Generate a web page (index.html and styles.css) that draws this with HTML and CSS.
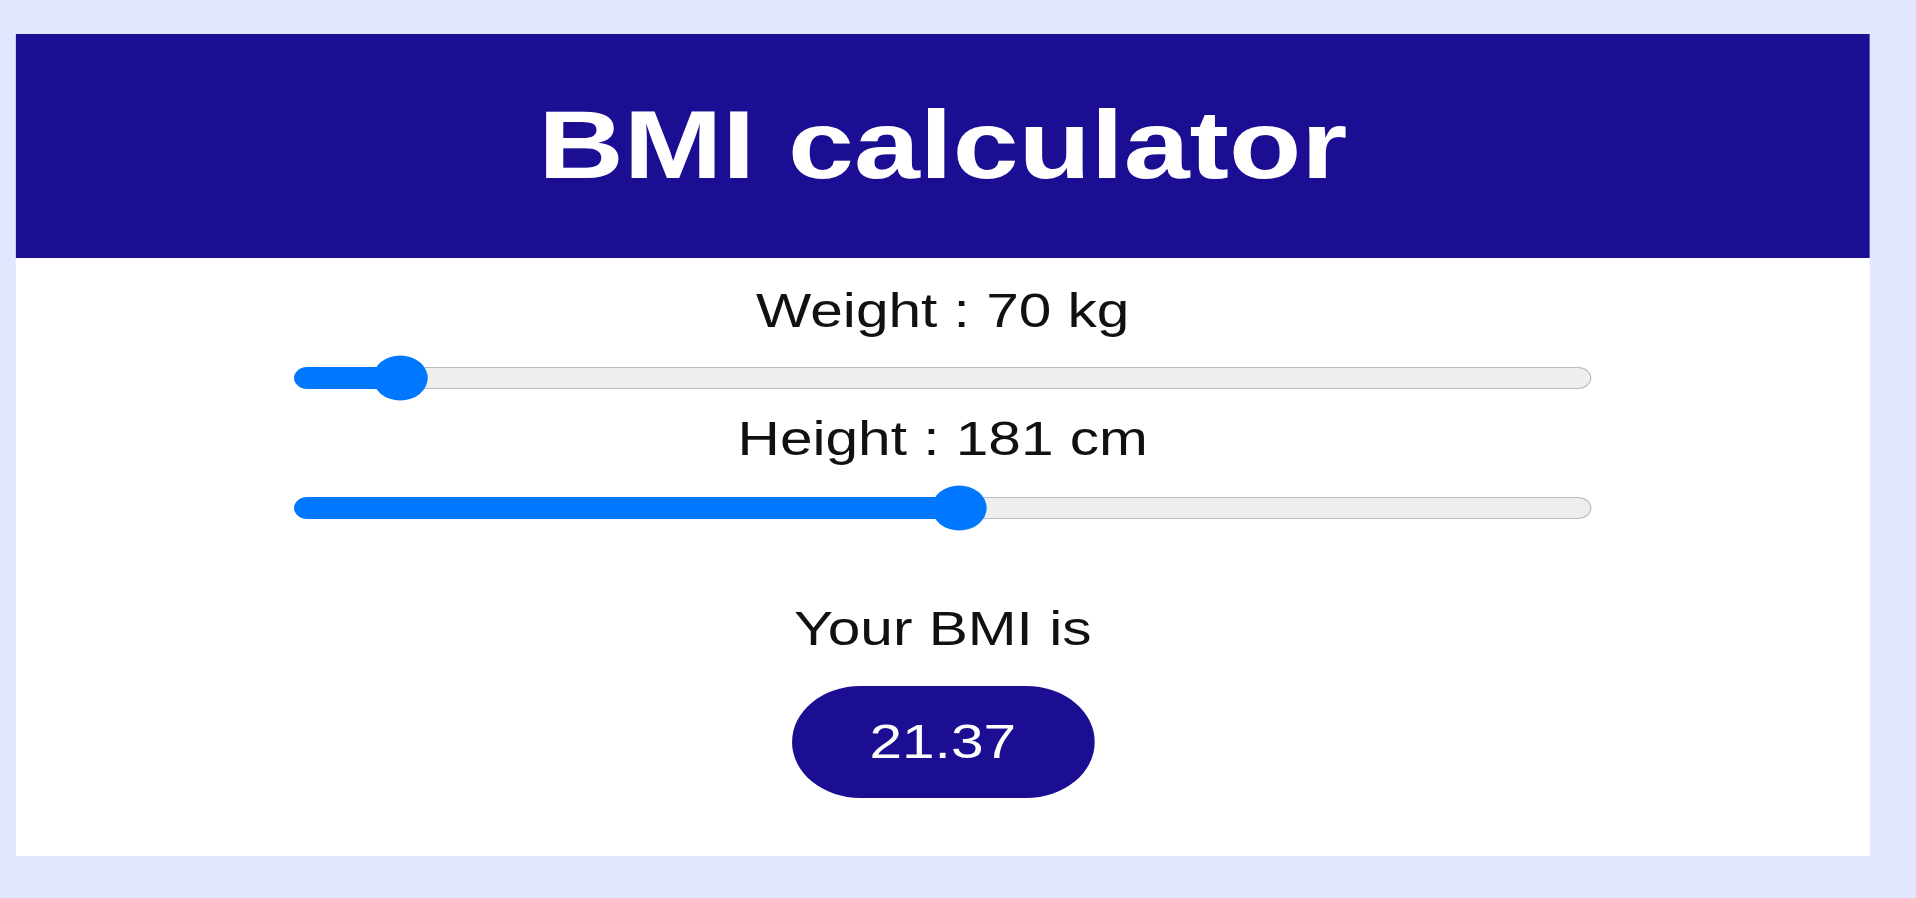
FILE: index.html
```html
<!DOCTYPE html>
<html lang="en">
<head>
<meta charset="utf-8">
<title>BMI calculator</title>
<link rel="stylesheet" href="styles.css">
</head>
<body>
<div class="page">
  <main class="card">
    <header class="card-header">
      <h1 class="title">BMI calculator</h1>
    </header>
    <section class="card-body">
      <div class="field-label">Weight : 70 kg</div>
      <div class="slider slider-first" role="slider" aria-label="Weight" aria-valuenow="70">
        <div class="track">
          <div class="fill" style="width:8.1%"></div>
          <div class="thumb" style="left:8.1%"></div>
        </div>
      </div>
      <div class="field-label">Height : 181 cm</div>
      <div class="slider" role="slider" aria-label="Height" aria-valuenow="181">
        <div class="track">
          <div class="fill" style="width:51.3%"></div>
          <div class="thumb" style="left:51.3%"></div>
        </div>
      </div>
      <div class="field-label result-label">Your BMI is</div>
      <div class="result">21.37</div>
    </section>
  </main>
</div>
</body>
</html>
```
FILE: styles.css
```css
html, body {
  margin: 0;
  padding: 0;
}

body {
  background: #e0e7ff;
  font-family: "Liberation Sans", Arial, sans-serif;
  color: #111;
  overflow: hidden;
}

.page {
  width: 1570px;
  padding-top: 34px;
  transform: scaleX(1.2204);
  transform-origin: 0 0;
}

.card {
  margin-left: 13px;
  width: 1519px;
  background: #ffffff;
}

.card-header {
  background: #1c0e92;
  padding: 56px 0 58px;
  text-align: center;
}

.title {
  margin: 0;
  font-size: 97px;
  line-height: 110px;
  font-weight: bold;
  color: #ffffff;
}

.card-body {
  display: flex;
  flex-direction: column;
  align-items: center;
  padding: 25px 0 58px;
}

.field-label {
  font-size: 48px;
  line-height: 55px;
  text-align: center;
}

.slider {
  width: 70%;
  height: 44px;
  display: flex;
  align-items: center;
  margin: 20px 0 11px;
}

.slider-first {
  margin-top: 18px;
}

.track {
  position: relative;
  flex: 1;
  height: 20px;
  border: 1px solid #bbbbbb;
  border-radius: 11px;
  background: #eeeeee;
}

.fill {
  position: absolute;
  left: -1px;
  top: -1px;
  height: 22px;
  border-radius: 11px;
  background: #0077ff;
}

.thumb {
  position: absolute;
  top: 50%;
  width: 45px;
  height: 45px;
  border-radius: 50%;
  background: #0077ff;
  transform: translate(-50%, -50%);
}

.result-label {
  margin-top: 60px;
}

.result {
  margin-top: 30px;
  width: 248px;
  height: 112px;
  border-radius: 56px;
  background: #1c0e92;
  color: #ffffff;
  font-size: 48px;
  line-height: 112px;
  text-align: center;
}
```
